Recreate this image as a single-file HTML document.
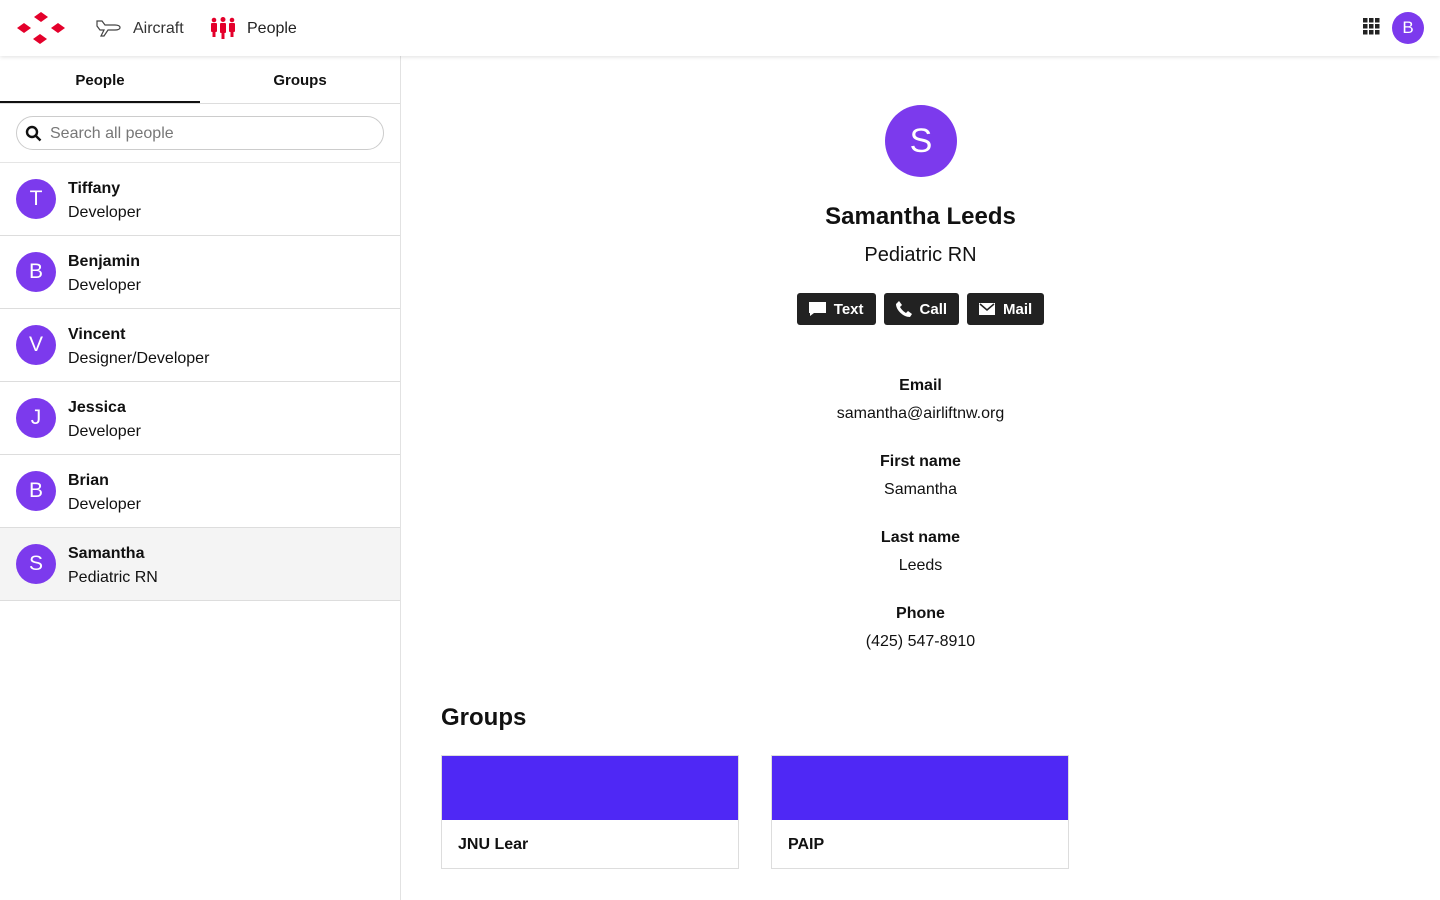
<!DOCTYPE html>
<html><head><meta charset="utf-8"><style>
*{box-sizing:border-box;margin:0;padding:0}
body{width:1440px;height:900px;overflow:hidden;font-family:"Liberation Sans",sans-serif;color:#111;background:#fff;position:relative}
.top{position:absolute;left:0;top:0;width:1440px;height:56px;background:#fff;box-shadow:0 1px 4px rgba(0,0,0,.12);z-index:2}
.side{position:absolute;left:0;top:56px;width:401px;height:844px;border-right:1px solid #e2e2e2}
.tabs{height:48px;border-bottom:1px solid #ddd;display:flex;font-weight:bold;font-size:15px}
.tabs div{width:200px;text-align:center;line-height:50px}
.tabs .on{border-bottom:2px solid #111}
.search{height:59px;padding:12px 16px;border-bottom:1px solid #e5e5e5}
.search div{height:34px;border:1px solid #ccc;border-radius:17px;position:relative;padding-left:33px;line-height:34px;color:#777;font-size:16px}
.row{height:73px;border-bottom:1px solid #ddd;position:relative}
.row.sel{background:#f4f4f4}
.av{position:absolute;left:16px;top:16px;width:40px;height:40px;border-radius:50%;background:#7c3aed;color:#fff;font-size:21px;text-align:center;line-height:40px}
.nm{position:absolute;left:68px;top:17px;font-weight:bold;font-size:16px}
.rl{position:absolute;left:68px;top:41px;font-size:16px}
.c{position:absolute;left:401px;width:1039px;text-align:center}
.btn{display:inline-flex;align-items:center;gap:8px;height:32px;background:#222;color:#fff;border-radius:3px;font-weight:bold;font-size:15px;padding:0 12px;vertical-align:top;margin:0 4px}
.lab{font-weight:bold;font-size:16px}
.val{font-size:16px}
.card{position:absolute;top:755px;width:298px;height:114px;border:1px solid #ddd}
.card div{height:64px;background:#4f28f5}
.card span{display:block;padding:16px;font-weight:bold;font-size:16px}
</style></head><body>
<div class="top">
<svg style="position:absolute;left:16px;top:11px" width="50" height="34" viewBox="0 0 50 34"><g fill="#e4002b"><path d="M25 1l7 5-7 5-7-5z"/><path d="M8 12l7 5-7 5-7-5z"/><path d="M42 12l7 5-7 5-7-5z"/><path d="M24 23l7 5-7 5-7-5z"/></g></svg>
<svg style="position:absolute;left:96px;top:18px" width="26" height="20" viewBox="0 0 26 20" fill="none" stroke="#444" stroke-width="1.2"><path d="M1 3h5l3 4h10c3 0 5 1 5 2.5S22 12 19 12h-7l-4 6H5l3-6H4L1 8z"/></svg>
<span style="position:absolute;left:133px;top:20px;font-size:16px;color:#333">Aircraft</span>
<svg style="position:absolute;left:210px;top:17px" width="26" height="22" viewBox="0 0 26 22" fill="#e4002b"><circle cx="4" cy="3" r="2.3"/><circle cx="13" cy="2.5" r="2.5"/><circle cx="22" cy="3" r="2.3"/><rect x="1" y="6" width="6" height="9" rx="1"/><rect x="10" y="6" width="6" height="10" rx="1"/><rect x="19" y="6" width="6" height="9" rx="1"/><rect x="2.5" y="14" width="3" height="6"/><rect x="11.5" y="15" width="3" height="7"/><rect x="20.5" y="14" width="3" height="6"/></svg>
<span style="position:absolute;left:247px;top:20px;font-size:16px;color:#222">People</span>
<svg style="position:absolute;left:1363px;top:18px" width="17" height="17" viewBox="0 0 17 17" fill="#222"><rect x="0" y="0" width="4.5" height="4.5"/><rect x="6" y="0" width="4.5" height="4.5"/><rect x="12" y="0" width="4.5" height="4.5"/><rect x="0" y="6" width="4.5" height="4.5"/><rect x="6" y="6" width="4.5" height="4.5"/><rect x="12" y="6" width="4.5" height="4.5"/><rect x="0" y="12" width="4.5" height="4.5"/><rect x="6" y="12" width="4.5" height="4.5"/><rect x="12" y="12" width="4.5" height="4.5"/></svg>
<div style="position:absolute;left:1392px;top:12px;width:32px;height:32px;border-radius:50%;background:#7c3aed;color:#fff;text-align:center;line-height:32px;font-size:17px">B</div>
</div>
<div class="side">
<div class="tabs"><div class="on">People</div><div>Groups</div></div>
<div class="search"><div><svg style="position:absolute;left:8px;top:8px" width="17" height="17" viewBox="0 0 17 17" fill="none" stroke="#111" stroke-width="2.4"><circle cx="7" cy="7" r="5"/><path d="M11 11l4.5 4.5"/></svg>Search all people</div></div>
<div class="row"><div class="av">T</div><div class="nm">Tiffany</div><div class="rl">Developer</div></div>
<div class="row"><div class="av">B</div><div class="nm">Benjamin</div><div class="rl">Developer</div></div>
<div class="row"><div class="av">V</div><div class="nm">Vincent</div><div class="rl">Designer/Developer</div></div>
<div class="row"><div class="av">J</div><div class="nm">Jessica</div><div class="rl">Developer</div></div>
<div class="row"><div class="av">B</div><div class="nm">Brian</div><div class="rl">Developer</div></div>
<div class="row sel"><div class="av">S</div><div class="nm">Samantha</div><div class="rl">Pediatric RN</div></div>
</div>
<div style="position:absolute;left:885px;top:105px;width:72px;height:72px;border-radius:50%;background:#7c3aed;color:#fff;text-align:center;line-height:72px;font-size:34px">S</div>
<div class="c" style="top:203px;font-weight:bold;font-size:24px">Samantha Leeds</div>
<div class="c" style="top:244px;font-size:20px">Pediatric RN</div>
<div class="c" style="top:293px">
<span class="btn"><svg width="17" height="16" viewBox="0 0 17 16" fill="#fff"><path d="M0 1h17v11H5l-4 3v-3H0z"/></svg>Text</span><span class="btn"><svg width="16" height="16" viewBox="0 0 16 16" fill="#fff"><path d="M3 0l3 4-2 2c1 2 4 5 6 6l2-2 4 3-2 3C7 16 0 9 0 3z"/></svg>Call</span><span class="btn"><svg width="16" height="12" viewBox="0 0 16 12"><rect width="16" height="12" fill="#fff"/><path d="M1 1l7 6 7-6" fill="none" stroke="#222" stroke-width="1.5"/></svg>Mail</span>
</div>
<div class="c lab" style="top:377px">Email</div><div class="c val" style="top:405px">samantha@airliftnw.org</div>
<div class="c lab" style="top:453px">First name</div><div class="c val" style="top:481px">Samantha</div>
<div class="c lab" style="top:529px">Last name</div><div class="c val" style="top:557px">Leeds</div>
<div class="c lab" style="top:605px">Phone</div><div class="c val" style="top:633px">(425) 547-8910</div>
<div style="position:absolute;left:441px;top:704px;font-weight:bold;font-size:24px">Groups</div>
<div class="card" style="left:441px"><div></div><span>JNU Lear</span></div>
<div class="card" style="left:771px"><div></div><span>PAIP</span></div>
</body></html>
